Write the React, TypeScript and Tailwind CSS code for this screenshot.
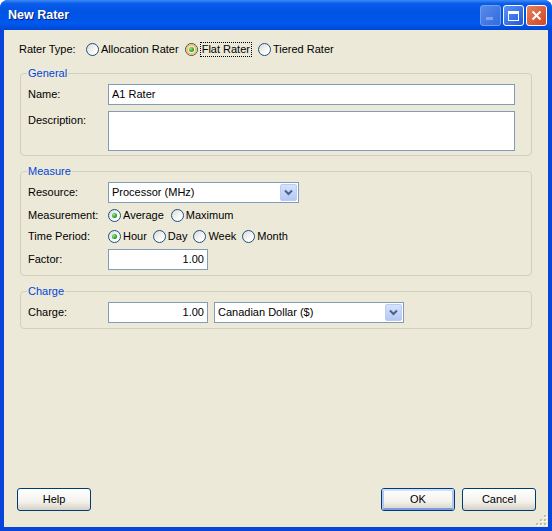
import React from "react";

const Radio: React.FC<{ checked?: boolean; hover?: boolean }> = ({ checked, hover }) => (
	<span className="relative flex h-[13px] w-[13px] shrink-0 items-center justify-center rounded-full border border-[#1C5180] bg-[linear-gradient(135deg,#DCDBD3,#FFFFFF_75%)]">
		{hover && <span className="absolute inset-0 rounded-full border-2 border-[#F9C15A]" />}
		{checked && (
			<span className="relative h-[5px] w-[5px] rounded-full bg-[radial-gradient(circle_at_35%_35%,#9BE59B,#22A422_60%,#127A12)]" />
		)}
	</span>
);

const Option: React.FC<{ label: string; checked?: boolean; hover?: boolean; focus?: boolean }> = ({
	label,
	checked,
	hover,
	focus,
}) => (
	<span className="flex items-center gap-[2px]">
		<Radio checked={checked} hover={hover} />
		<span className={focus ? "border border-dotted border-black px-[1px] leading-[13px]" : "leading-[13px]"}>
			{label}
		</span>
	</span>
);

const TextBox: React.FC<{ value: string; className?: string; right?: boolean }> = ({ value, className, right }) => (
	<div
		className={`flex h-[21px] items-center border border-[#7F9DB9] bg-white px-[3px] ${right ? "justify-end" : ""} ${className ?? ""}`}
	>
		{value}
	</div>
);

const ComboBox: React.FC<{ value: string; className?: string }> = ({ value, className }) => (
	<div className={`flex h-[21px] items-center justify-between border border-[#7F9DB9] bg-white pl-[3px] pr-[1px] ${className ?? ""}`}>
		<span>{value}</span>
		<span className="flex h-[17px] w-[17px] items-center justify-center rounded-[2px] border border-[#BCCBF3] bg-[linear-gradient(180deg,#D6E2FC,#B4C8F6)]">
			<svg width="9" height="7" viewBox="0 0 9 7">
				<path d="M1 1.5 L4.5 5 L8 1.5" fill="none" stroke="#4D6185" strokeWidth="2" />
			</svg>
		</span>
	</div>
);

const Group: React.FC<{ title: string; className?: string; children: React.ReactNode }> = ({ title, className, children }) => (
	<fieldset className={`rounded-[4px] border border-[#D0D0BF] pl-[7px] pr-[16px] ${className ?? ""}`}>
		<legend className="-ml-[1px] px-[1px] leading-[14px] text-[#0046D5]">{title}</legend>
		{children}
	</fieldset>
);

const Row: React.FC<{ label: string; className?: string; children: React.ReactNode }> = ({ label, className, children }) => (
	<div className={`flex items-center ${className ?? ""}`}>
		<span className="w-[80px] shrink-0">{label}</span>
		{children}
	</div>
);

const Button: React.FC<{ label: string; isDefault?: boolean }> = ({ label, isDefault }) => (
	<div className="flex h-[23px] w-[74px] items-center justify-center rounded-[3px] border border-[#003C74] bg-[linear-gradient(180deg,#FFFFFF,#F3F2EC_60%,#D6D0C5)]">
		<div
			className={`flex h-full w-full items-center justify-center rounded-[2px] ${
				isDefault ? "border-2 border-[#B2C8F3] border-t-[#CEE0FD] border-b-[#7D9BE3]" : ""
			}`}
		>
			{label}
		</div>
	</div>
);

export default function App() {
	return (
		<div className="flex h-[531px] w-[552px] flex-col overflow-hidden rounded-t-[8px] bg-[#0A45D9] font-['Liberation_Sans',Arial,sans-serif] text-[11px] text-black">
			{/* title bar */}
			<div className="flex h-[30px] shrink-0 items-center justify-between bg-[linear-gradient(180deg,#3D8AF7_0%,#0A5CEA_12%,#0053E3_40%,#0058EE_80%,#0047D3_100%)] pl-[8px] pr-[5px]">
				<span className="text-[12.5px] font-bold text-white [text-shadow:1px_1px_0_#0A1E7A]">New Rater</span>
				<div className="flex gap-[2px] pt-[1px]">
					<span className="flex h-[21px] w-[21px] items-end rounded-[3px] border border-[#8FB0F0] bg-[linear-gradient(135deg,#6E98EC,#3E70DC)] pb-[5px] pl-[5px] opacity-80">
						<span className="h-[3px] w-[7px] bg-[#9DB6EC]" />
					</span>
					<span className="flex h-[21px] w-[21px] items-center justify-center rounded-[3px] border border-white bg-[linear-gradient(135deg,#5C93F7,#2159D9)]">
						<span className="h-[10px] w-[11px] border border-t-[3px] border-white" />
					</span>
					<span className="flex h-[21px] w-[21px] items-center justify-center rounded-[3px] border border-white bg-[linear-gradient(135deg,#E7805F,#D3461F)]">
						<svg width="11" height="11" viewBox="0 0 11 11">
							<path d="M1.5 1.5 L9.5 9.5 M9.5 1.5 L1.5 9.5" stroke="white" strokeWidth="2" />
						</svg>
					</span>
				</div>
			</div>

			{/* client area */}
			<div className="relative mx-[4px] mb-[4px] flex flex-1 flex-col bg-[#ECE9D8]">
				<div className="flex flex-col px-[16px] pt-[11px]">
					<div className="flex h-[16px] items-center">
						<span className="-ml-[1px] w-[67px]">Rater Type:</span>
						<div className="flex items-center gap-[6px]">
							<Option label="Allocation Rater" />
							<Option label="Flat Rater" checked hover focus />
							<Option label="Tiered Rater" />
						</div>
					</div>

					<Group title="General" className="mt-[9px] pb-[4px]">
						<Row label="Name:" className="mt-[4px]">
							<TextBox value="A1 Rater" className="flex-1" />
						</Row>
						<div className="mt-[6px] flex">
							<span className="w-[80px] shrink-0 pt-[1px]">Description:</span>
							<div className="h-[40px] flex-1 border border-[#7F9DB9] bg-white" />
						</div>
					</Group>

					<Group title="Measure" className="mt-[8px] pb-[5px]">
						<Row label="Resource:" className="mt-[4px]">
							<ComboBox value="Processor (MHz)" className="w-[191px]" />
						</Row>
						<Row label="Measurement:" className="mt-[4px] h-[16px]">
							<div className="flex items-center gap-[7px]">
								<Option label="Average" checked />
								<Option label="Maximum" />
							</div>
						</Row>
						<Row label="Time Period:" className="mt-[5px] h-[16px]">
							<div className="flex items-center gap-[6px]">
								<Option label="Hour" checked />
								<Option label="Day" />
								<Option label="Week" />
								<Option label="Month" />
							</div>
						</Row>
						<Row label="Factor:" className="mt-[5px]">
							<TextBox value="1.00" right className="w-[100px]" />
						</Row>
					</Group>

					<Group title="Charge" className="mt-[8px] pb-[5px]">
						<Row label="Charge:" className="mt-[4px]">
							<TextBox value="1.00" right className="w-[100px]" />
							<ComboBox value="Canadian Dollar ($)" className="ml-[6px] w-[190px]" />
						</Row>
					</Group>
				</div>

				<div className="flex-1" />

				<div className="flex items-center justify-between pb-[16px] pl-[13px] pr-[12px]">
					<Button label="Help" />
					<div className="flex gap-[7px]">
						<Button label="OK" isDefault />
						<Button label="Cancel" />
					</div>
				</div>

				{/* size grip */}
				<svg className="absolute bottom-[1px] right-[1px]" width="12" height="12" viewBox="0 0 12 12">
					{[
						[10, 2],
						[10, 6],
						[6, 6],
						[10, 10],
						[6, 10],
						[2, 10],
					].map(([x, y]) => (
						<g key={`${x}-${y}`}>
							<rect x={x} y={y} width="2" height="2" fill="#FFFFFF" />
							<rect x={x - 1} y={y - 1} width="2" height="2" fill="#C0BCA8" />
						</g>
					))}
				</svg>
			</div>
		</div>
	);
}
